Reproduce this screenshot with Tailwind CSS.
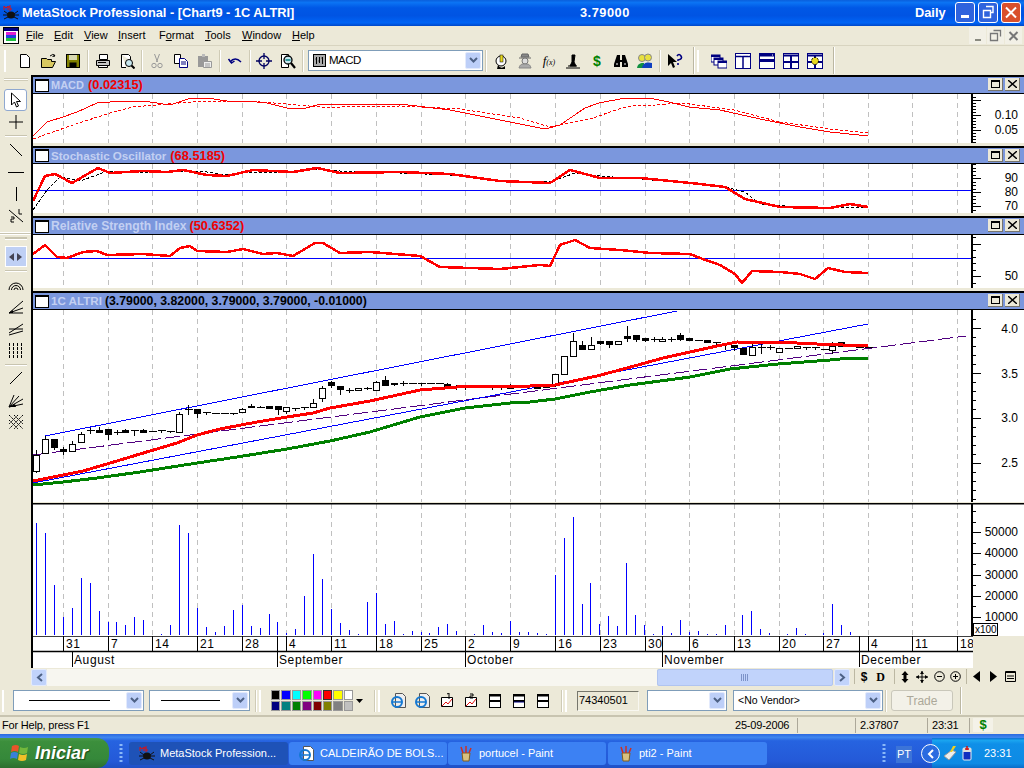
<!DOCTYPE html>
<html lang='en'>
<head>
	<meta charset='UTF-8'>
	<meta name='viewport' content='width=device-width, initial-scale=1.0'>
	<title>MetaStock Professional</title>
	<script src="https://cdn.jsdelivr.net/npm/@tailwindcss/browser@4"></script>
</head>
<body class="[font-family:'Liberation_Sans',Arial,sans-serif]">
<div class="w-[1024px] h-[768px] overflow-hidden flex flex-col bg-[#ece9d8] text-[11px] text-black">

	<!-- Title bar -->
	<div class="h-[26px] shrink-0 flex items-center relative text-white font-bold text-[12.8px] bg-[linear-gradient(180deg,#0a5fdc_0%,#0b74f4_10%,#0058e6_30%,#0054e3_60%,#0064f5_88%,#0047c8_100%)]">
		<svg class="ml-[3px] w-[16px] h-[16px]" viewBox="0 0 16 16"><ellipse cx="8" cy="10" rx="4" ry="3.5" fill="#111"/><path d="M1 6l4 3M0 10l4 0M1 14l4-2M15 6l-4 3M16 10l-4 0M15 14l-4-2" stroke="#111"/><path d="M1 5V1l2 2 2-2v4M8 1H6v2h2v2H6" stroke="#e01010" fill="none"/></svg>
		<span class="ml-[3px]">MetaStock Professional - [Chart9 - 1C ALTRI]</span>
		<span class="absolute left-[580px] tracking-[.5px]">3.79000</span>
		<span class="absolute left-[915px]">Daily</span>
		<div class="absolute left-[955px] top-[2px] w-[20px] h-[21px] rounded-[3px] border border-white bg-[#2f63dd] flex items-end"><div class="w-[8px] h-[3px] bg-white ml-[5px] mb-[4px]"></div></div>
		<div class="absolute left-[978px] top-[2px] w-[20px] h-[21px] rounded-[3px] border border-white bg-[#2f63dd]"><svg viewBox="0 0 18 19" class="w-[18px] h-[19px]"><path d="M7 3.5h7v6h-2M4.500 7.500h7v7h-7z" stroke="#fff" stroke-width="1.400" fill="none"/></svg></div>
		<div class="absolute left-[1001px] top-[2px] w-[20px] h-[21px] rounded-[3px] border border-white bg-[#d9502c]"><svg viewBox="0 0 18 19" class="w-[18px] h-[19px]"><path d="M4 4.500l10 10M14 4.500l-10 10" stroke="#fff" stroke-width="2"/></svg></div>
	</div>

	<!-- Menu bar -->
	<div class="h-[20px] shrink-0 flex items-center relative border-b border-[#d8d4c0]">
		<svg class="ml-[3px] w-[16px] h-[17px]" viewBox="0 0 16 17"><rect x=".5" y=".5" width="15" height="16" fill="#fff" stroke="#000"/><rect x="1" y="1" width="14" height="3" fill="#000080"/><rect x="3" y="5" width="10" height="3" fill="#e020d0"/><rect x="3" y="8" width="10" height="3" fill="#2040e0"/><rect x="3" y="11" width="10" height="3" fill="#20c040"/></svg>
		<div class="flex ml-[7px]">
			<span class="w-[28px]"><u>F</u>ile</span>
			<span class="w-[30px]"><u>E</u>dit</span>
			<span class="w-[34px]"><u>V</u>iew</span>
			<span class="w-[41px]"><u>I</u>nsert</span>
			<span class="w-[46px]">F<u>o</u>rmat</span>
			<span class="w-[37px]"><u>T</u>ools</span>
			<span class="w-[50px]"><u>W</u>indow</span>
			<span><u>H</u>elp</span>
		</div>
		<div class="absolute right-[2px] top-[1px] flex gap-[1px]">
			<div class="w-[17px] h-[17px] bg-[#f2f0e6] flex items-end justify-center"><div class="w-[6px] h-[2px] bg-[#8a8a80] mb-[3px]"></div></div>
			<div class="w-[17px] h-[17px] bg-[#f2f0e6]"><svg viewBox="0 0 17 17"><path d="M6.500 3.500h7v6M3.500 6.500h7v7h-7z" stroke="#777" fill="none" stroke-width="1.300"/></svg></div>
			<div class="w-[17px] h-[17px] bg-[#f2f0e6]"><svg viewBox="0 0 17 17"><path d="M4.500 5l8 8M12.500 5l-8 8" stroke="#777" stroke-width="2"/></svg></div>
		</div>
	</div>

	<!-- Main toolbar -->
	<div class="h-[29px] shrink-0 flex items-center pl-[4px]">
		<div class="w-[2px] h-[22px] border-x border-x-[#fff] bg-[#cfcbb6] mr-[7px]"></div>
		<div class="w-6 flex justify-center"><svg class="w-[16px] h-[16px]" viewBox="0 0 16 16"><path d="M3.500 1.500h6l3 3v10h-9z" fill="#fff" stroke="#000"/></svg></div>
		<div class="w-6 flex justify-center"><svg class="w-[16px] h-[16px]" viewBox="0 0 16 16"><path d="M.5 14.500v-9h5l1 1h4v2h4l-3 6z" fill="#d8c860" stroke="#000"/><path d="M9 3q3-3 5 0M14 3l-1.500-2M14 3l-2.500.5" stroke="#000" fill="none"/></svg></div>
		<div class="w-6 flex justify-center"><svg class="w-[16px] h-[16px]" viewBox="0 0 16 16"><rect x="1.500" y="1.500" width="13" height="13" fill="#808000" stroke="#000"/><rect x="4" y="2" width="8" height="5" fill="#d8d8b0"/><rect x="4.500" y="9.500" width="7" height="5" fill="#000"/></svg></div>
		<div class="w-[2px] h-[22px] mx-[2px] border-r border-white bg-[#cfcbb6]"></div>
		<div class="w-6 flex justify-center"><svg class="w-[16px] h-[16px]" viewBox="0 0 16 16"><path d="M4.500 1.500h8v5h-8z" fill="#fff" stroke="#000"/><path d="M1.500 7.500h13v5h-13z" fill="#c8c8c8" stroke="#000"/><path d="M3.500 12.500h9v2h-9z" fill="#fff" stroke="#000"/><path d="M3 9.500h8" stroke="#000"/></svg></div>
		<div class="w-6 flex justify-center"><svg class="w-[16px] h-[16px]" viewBox="0 0 16 16"><path d="M2.500 1.500h7l2 2v4M7 14.500H2.500v-13" fill="#fff" stroke="#000"/><circle cx="10" cy="10" r="3.500" fill="#c8e8f0" stroke="#000"/><path d="M12.500 12.500l3 3" stroke="#000" stroke-width="2"/></svg></div>
		<div class="w-[2px] h-[22px] mx-[2px] border-r border-white bg-[#cfcbb6]"></div>
		<div class="w-6 flex justify-center"><svg class="w-[16px] h-[16px]" viewBox="0 0 16 16"><path d="M5.500 1l3 8M10.500 1l-3 8" stroke="#999" fill="none"/><circle cx="5" cy="12.500" r="2.200" fill="none" stroke="#999"/><circle cx="11" cy="12.500" r="2.200" fill="none" stroke="#999"/></svg></div>
		<div class="w-6 flex justify-center"><svg class="w-[16px] h-[16px]" viewBox="0 0 16 16"><path d="M1.500 1.500h6v9h-6z" fill="#fff" stroke="#000"/><path d="M6.500 5.500h5l3 3v6h-8z" fill="#fff" stroke="#000080"/><path d="M8 9h5M8 11h5" stroke="#000080"/></svg></div>
		<div class="w-6 flex justify-center"><svg class="w-[16px] h-[16px]" viewBox="0 0 16 16"><path d="M1 3h10v11H1z" fill="#999"/><path d="M5 1h3v3H5z" fill="#bbb"/><path d="M6.500 8.500h8v6h-8z" fill="#eee" stroke="#999"/><path d="M8 11h5M8 13h5" stroke="#999"/></svg></div>
		<div class="w-[2px] h-[22px] mx-[2px] border-r border-white bg-[#cfcbb6]"></div>
		<div class="w-6 flex justify-center"><svg class="w-[16px] h-[16px]" viewBox="0 0 16 16"><path d="M1.500 6l3 4 3-2" stroke="#000080" fill="none" stroke-width="1.500"/><path d="M3 9q5-6 11 0" stroke="#000080" fill="none" stroke-width="1.500"/></svg></div>
		<div class="w-[2px] h-[22px] mx-[1.500px] border-r border-white bg-[#cfcbb6]"></div>
		<div class="w-6 flex justify-center"><svg class="w-[16px] h-[16px]" viewBox="0 0 16 16"><circle cx="8" cy="8" r="5" fill="none" stroke="#000060" stroke-width="1.300"/><path d="M8 0v6M8 10v6M0 8h6M10 8h6" stroke="#000060" stroke-width="1.300"/></svg></div>
		<div class="w-6 flex justify-center"><svg class="w-[16px] h-[16px]" viewBox="0 0 16 16"><path d="M1.500 1.500h7v13h-7z" fill="#fff" stroke="#000"/><circle cx="8" cy="7" r="4" fill="#c8e8f0" stroke="#000" stroke-width="1.300"/><path d="M5.500 7h5" stroke="#008080" stroke-width="1.500"/><path d="M11 10l4 5" stroke="#000" stroke-width="2.200"/></svg></div>
		<div class="w-[2px] h-[22px] mx-[2px] border-r border-white bg-[#cfcbb6]"></div>
		<!-- Indicator combo -->
		<div class="ml-[2px] w-[175px] h-[21px] border border-[#7f9db9] bg-white flex items-center justify-between pl-[4px] pr-[1px] text-[11.500px]">
			<div class="flex items-center gap-[3px]"><svg class="w-[13px] h-[13px]" viewBox="0 0 13 13"><rect x=".5" y=".5" width="12" height="12" fill="#aaa" stroke="#000"/><path d="M3.500 3v7M6.500 3v6M9.500 3v7M2.500 5h1M5.500 7h1M8.500 4h1" stroke="#000"/></svg><span class="tracking-[-.5px]">MACD</span></div>
			<div class="w-[16px] h-[17px] rounded-[2px] bg-[#bdcff8] border border-[#e3eafc] flex items-center justify-center"><svg class="w-[9px] h-[7px]" viewBox="0 0 9 7"><path d="M1 1l3.500 3.500L8 1" stroke="#4d6185" stroke-width="2" fill="none"/></svg></div>
		</div>
		<div class="w-[2px] h-[22px] mx-[2px] border-r border-white bg-[#cfcbb6]"></div>
		<div class="w-6 flex justify-center"><svg class="w-[16px] h-[18px]" viewBox="0 0 16 18"><circle cx="8" cy="9" r="5" fill="#fff" stroke="#000"/><path d="M5 13q3 5 7 1v3H4z" fill="#000"/><rect x="7" y="3" width="3" height="7" fill="#e8d820" stroke="#000" stroke-width=".5"/></svg></div>
		<div class="w-6 flex justify-center"><svg class="w-[16px] h-[16px]" viewBox="0 0 16 16"><path d="M4 4h8l-1-3H5zM2 5h12" stroke="#666" fill="#888"/><circle cx="8" cy="8" r="3" fill="#ddd" stroke="#777"/><path d="M2 15c1-4 3-4 6-4s5 0 6 4z" fill="#aaa" stroke="#888"/></svg></div>
		<div class="w-6 flex justify-center"><span class="[font-family:'Liberation_Serif',serif] italic text-[13px] leading-none">f<span class="text-[8px]">(x)</span></span></div>
		<div class="w-6 flex justify-center"><svg class="w-[16px] h-[16px]" viewBox="0 0 16 16"><path d="M1 15h14M3 13h9M7 2l3 0-1 7 2 4H5l2-4z" stroke="#000" fill="#000"/></svg></div>
		<div class="w-6 flex justify-center text-[#008000] font-bold text-[14px] leading-none">$</div>
		<div class="w-6 flex justify-center"><svg class="w-[16px] h-[16px]" viewBox="0 0 16 16"><path d="M4 2h3v5h2V2h3l3 9v3H9V9H7v5H1v-3z" fill="#000"/><path d="M3 11h2M11 11h2" stroke="#fff"/></svg></div>
		<div class="w-6 flex justify-center"><svg class="w-[16px] h-[16px]" viewBox="0 0 16 16"><circle cx="5" cy="5" r="3.500" fill="#e8e040" stroke="#888"/><circle cx="11" cy="4.500" r="3.500" fill="#e8e040" stroke="#888"/><path d="M0 15c1-5 4-5 7-5v5z" fill="#109040"/><path d="M5 15c1-6 6-6 10-5v5z" fill="#1040c0"/></svg></div>
		<div class="w-[2px] h-[22px] mx-[2px] border-r border-white bg-[#cfcbb6]"></div>
		<div class="w-6 flex justify-center"><svg class="w-[16px] h-[16px]" viewBox="0 0 16 16"><path d="M1 1v12l3-3 2 5 2-1-2-5h4z" fill="#000"/><path d="M10 3q2-3 4 0t-3 4v1" stroke="#000080" stroke-width="1.600" fill="none"/><path d="M11 10v2" stroke="#000080" stroke-width="1.600"/></svg></div>
		<div class="w-[2px] h-[27px] ml-[6px] mr-[2px] border-r border-white bg-[#bbb7a2]"></div>
		<div class="w-[2px] h-[22px] border-x border-x-[#fff] bg-[#cfcbb6] mr-[8px]"></div>
		<div class="w-6 flex justify-center"><svg class="w-[16px] h-[16px]" viewBox="0 0 16 16"><rect x="0" y="2" width="9" height="7" fill="#fff" stroke="#000080"/><rect x="0" y="2" width="9" height="2" fill="#000080"/><rect x="3" y="5" width="9" height="7" fill="#fff" stroke="#000080"/><rect x="3" y="5" width="9" height="2" fill="#000080"/><rect x="7" y="8" width="9" height="7" fill="#fff" stroke="#000080"/><rect x="7" y="8" width="9" height="2" fill="#000080"/></svg></div>
		<div class="w-6 flex justify-center"><svg class="w-[16px] h-[16px]" viewBox="0 0 16 16"><rect x=".5" y=".5" width="15" height="15" fill="#fff" stroke="#000080"/><path d="M0 3.500h16M8 3v13" stroke="#000080" stroke-width="1.500"/><path d="M6.500 2h1M13 2h1" stroke="#fff"/></svg></div>
		<div class="w-6 flex justify-center"><svg class="w-[16px] h-[16px]" viewBox="0 0 16 16"><rect x=".5" y=".5" width="15" height="15" fill="#fff" stroke="#000080"/><path d="M0 2h16M0 7.500h16" stroke="#000080" stroke-width="3"/><path d="M13 2h1" stroke="#fff"/></svg></div>
		<div class="w-6 flex justify-center"><svg class="w-[16px] h-[16px]" viewBox="0 0 16 16"><rect x=".5" y=".5" width="15" height="15" fill="#fff" stroke="#000080"/><path d="M0 2.500h16M0 9h16M8 2v14" stroke="#000080" stroke-width="2"/></svg></div>
		<div class="w-6 flex justify-center"><svg class="w-[16px] h-[16px]" viewBox="0 0 16 16"><rect x=".5" y=".5" width="15" height="15" fill="#fff" stroke="#000080"/><path d="M0 2.500h16M0 9h16M8 2v14" stroke="#000080" stroke-width="2"/><circle cx="8" cy="8" r="3.500" fill="#e8d820" stroke="#000" stroke-dasharray="2 1"/></svg></div>
		<div class="w-[2px] h-[27px] ml-[6px] border-r border-white bg-[#bbb7a2]"></div>
	</div>

	<!-- Left tools and chart -->
	<div class="h-[593px] shrink-0 flex">
		<div class="w-[31px] shrink-0 flex flex-col items-center pt-[3px]">
			<div class="w-[24px] h-[3px] border-y border-y-[#d0ccb8] bg-white"></div>
			<div class="mt-[8px] w-[23px] h-[22px] rounded-[3px] bg-white border border-[#8fa8d0] flex items-center justify-center"><svg class="w-[12px] h-[16px]" viewBox="0 0 12 16"><path d="M1.500 1v12l3-3 2 5 2-1-2-4.500h4z" fill="#fff" stroke="#000"/></svg></div>
			<div class="h-[22px] flex items-center"><svg class="w-[14px] h-[14px]" viewBox="0 0 14 14"><path d="M7 0v14M0 7h14" stroke="#000"/></svg></div>
			<div class="w-[22px] h-[2px] my-[2px] bg-[#c8c4b0] border-b border-white"></div>
			<div class="h-[22px] flex items-center"><svg class="w-[14px] h-[14px]" viewBox="0 0 14 14"><path d="M1 1l12 12" stroke="#000"/></svg></div>
			<div class="h-[22px] flex items-center"><svg class="w-[16px] h-[14px]" viewBox="0 0 16 14"><path d="M0 7.500h16" stroke="#000"/></svg></div>
			<div class="h-[22px] flex items-center"><svg class="w-[14px] h-[14px]" viewBox="0 0 14 14"><path d="M7.500 0v14" stroke="#000"/></svg></div>
			<div class="h-[22px] flex items-center"><svg class="w-[16px] h-[16px]" viewBox="0 0 16 16"><path d="M1 2l14 12" stroke="#000"/><path d="M11 1v5h3M3 9h3v2H3v3h3" stroke="#000" fill="none"/></svg></div>
			<div class="w-[31px] h-[3px] mt-[5px] bg-[#c8c4b0] border-y border-y-white"></div>
			<div class="w-[22px] h-[3px] mt-[2px] bg-[#c8c4b0] border-b border-white"></div>
			<div class="mt-[6px] w-[22px] h-[21px] bg-[#bfd0f5] border border-white flex items-center justify-center gap-[3px]"><svg class="w-[5px] h-[8px]" viewBox="0 0 5 8"><path d="M5 0v8L0 4z" fill="#445"/></svg><svg class="w-[5px] h-[8px]" viewBox="0 0 5 8"><path d="M0 0v8l5-4z" fill="#445"/></svg></div>
			<div class="w-[22px] h-[2px] mt-[3px] mb-[2px] bg-[#c8c4b0] border-b border-white"></div>
			<div class="h-[22px] flex items-center"><svg class="w-[16px] h-[14px]" viewBox="0 0 16 14"><path d="M1 12a7 7 0 0 1 14 0M3.500 12a4.500 4.500 0 0 1 9 0M6 12a2 2 0 0 1 4 0" stroke="#000" fill="none"/></svg></div>
			<div class="h-[22px] flex items-center"><svg class="w-[16px] h-[14px]" viewBox="0 0 16 14"><path d="M1 13L15 1M1 13l14-5M1 13h14" stroke="#000" fill="none"/><path d="M1 13l4-3v3z" fill="#000"/></svg></div>
			<div class="h-[22px] flex items-center"><svg class="w-[16px] h-[14px]" viewBox="0 0 16 14"><path d="M1 11L15 2M1 7L15 7M1 13l14-4" stroke="#000" fill="none"/></svg></div>
			<div class="h-[22px] flex items-center"><svg class="w-[16px] h-[16px]" viewBox="0 0 16 16"><path d="M1.500 0v16M5.500 0v16M9.500 0v16M13.500 0v16" stroke="#000" stroke-dasharray="3 1"/></svg></div>
			<div class="w-[22px] h-[2px] my-[1.500px] bg-[#c8c4b0] border-b border-white"></div>
			<div class="h-[22px] flex items-center"><svg class="w-[14px] h-[14px]" viewBox="0 0 14 14"><path d="M1 13L13 1" stroke="#000"/></svg></div>
			<div class="h-[22px] flex items-center"><svg class="w-[16px] h-[16px]" viewBox="0 0 16 16"><path d="M1 15L6 3M1 15L11 4M1 15l14-8M1 15l14-3" stroke="#000"/><path d="M1 15l6-3 1 3z" fill="#000"/></svg></div>
			<div class="h-[22px] flex items-center"><svg class="w-[16px] h-[16px]" viewBox="0 0 16 16"><path d="M1 1l14 14M15 1L1 15M1 6l9 9M6 1l9 9M10 1L1 10M15 6l-9 9" stroke="#000" stroke-dasharray="1.500 .7"/></svg></div>
		</div>

		<div class="w-[993px] shrink-0 border-l-2 border-black flex flex-col">
			<!-- MACD pane -->
			<div class="h-[19px] shrink-0 border-t-2 border-b border-black bg-[#7b97dd] flex items-center pl-[2px] relative">
				<div class="w-[14px] h-[13px] bg-white border border-black border-t-2"></div>
				<span class="ml-[2px] font-bold text-[11px] text-[#c3d0f2]">MACD</span>
				<span class="ml-[4px] font-bold text-[12.800px] text-[#f00000]">(0.02315)</span>
				<div class="absolute right-[4px] top-[1px] flex gap-[2px]">
					<div class="w-[15px] h-[13px] bg-[#ece9d8] border-r border-b border-black/50 flex items-center justify-center"><div class="w-[9px] h-[8px] border border-black border-t-2"></div></div>
					<div class="w-[15px] h-[13px] bg-[#ece9d8] border-r border-b border-black/50 flex items-center justify-center"><svg class="w-[9px] h-[8px]" viewBox="0 0 9 8"><path d="M0 0l9 8M9 0L0 8" stroke="#000" stroke-width="1.400"/></svg></div>
				</div>
			</div>
			<svg id="macd" viewBox="33 94 991 49" class="block w-[991px] h-[49px] shrink-0 bg-white"></svg>

			<!-- Stochastic pane -->
			<div class="h-[18px] mt-[3px] shrink-0 border-t-2 border-b border-black bg-[#7b97dd] flex items-center pl-[2px] relative">
				<div class="w-[14px] h-[13px] bg-white border border-black border-t-2"></div>
				<span class="ml-[2px] font-bold text-[11.600px] text-[#c3d0f2]">Stochastic Oscillator</span>
				<span class="ml-[4px] font-bold text-[12.800px] text-[#f00000]">(68.5185)</span>
				<div class="absolute right-[4px] top-[1px] flex gap-[2px]">
					<div class="w-[15px] h-[13px] bg-[#ece9d8] border-r border-b border-black/50 flex items-center justify-center"><div class="w-[9px] h-[8px] border border-black border-t-2"></div></div>
					<div class="w-[15px] h-[13px] bg-[#ece9d8] border-r border-b border-black/50 flex items-center justify-center"><svg class="w-[9px] h-[8px]" viewBox="0 0 9 8"><path d="M0 0l9 8M9 0L0 8" stroke="#000" stroke-width="1.400"/></svg></div>
				</div>
			</div>
			<svg id="stoch" viewBox="33 164 991 49" class="block w-[991px] h-[49px] shrink-0 bg-white"></svg>

			<!-- RSI pane -->
			<div class="h-[19px] mt-[3px] shrink-0 border-t-2 border-b border-black bg-[#7b97dd] flex items-center pl-[2px] relative">
				<div class="w-[14px] h-[13px] bg-white border border-black border-t-2"></div>
				<span class="ml-[2px] font-bold text-[12.200px] text-[#c3d0f2]">Relative Strength Index</span>
				<span class="ml-[3px] font-bold text-[12.800px] text-[#f00000]">(50.6352)</span>
				<div class="absolute right-[4px] top-[1px] flex gap-[2px]">
					<div class="w-[15px] h-[13px] bg-[#ece9d8] border-r border-b border-black/50 flex items-center justify-center"><div class="w-[9px] h-[8px] border border-black border-t-2"></div></div>
					<div class="w-[15px] h-[13px] bg-[#ece9d8] border-r border-b border-black/50 flex items-center justify-center"><svg class="w-[9px] h-[8px]" viewBox="0 0 9 8"><path d="M0 0l9 8M9 0L0 8" stroke="#000" stroke-width="1.400"/></svg></div>
				</div>
			</div>
			<svg id="rsi" viewBox="33 235 991 53" class="block w-[991px] h-[53px] shrink-0 bg-white"></svg>

			<!-- Price pane -->
			<div class="h-[19px] mt-[3px] shrink-0 border-t-2 border-b border-black bg-[#7b97dd] flex items-center pl-[2px] relative">
				<div class="w-[14px] h-[13px] bg-white border border-black border-t-2"></div>
				<span class="ml-[2px] font-bold text-[11.600px] text-[#c3d0f2]">1C ALTRI</span>
				<span class="ml-[3px] font-bold text-[12.300px]">(3.79000, 3.82000, 3.79000, 3.79000, -0.01000)</span>
				<div class="absolute right-[4px] top-[1px] flex gap-[2px]">
					<div class="w-[15px] h-[13px] bg-[#ece9d8] border-r border-b border-black/50 flex items-center justify-center"><div class="w-[9px] h-[8px] border border-black border-t-2"></div></div>
					<div class="w-[15px] h-[13px] bg-[#ece9d8] border-r border-b border-black/50 flex items-center justify-center"><svg class="w-[9px] h-[8px]" viewBox="0 0 9 8"><path d="M0 0l9 8M9 0L0 8" stroke="#000" stroke-width="1.400"/></svg></div>
				</div>
			</div>
			<svg id="price" viewBox="33 310 991 192" class="block w-[991px] h-[192px] shrink-0 bg-white"></svg>
			<div class="h-[1px] shrink-0 bg-[#ece9d8]"></div>
			<!-- Volume pane -->
			<svg id="volume" viewBox="33 503 991 133" class="block w-[991px] h-[133px] shrink-0 bg-white"></svg>
			<svg id="dates" viewBox="33 636 940 32" class="block w-[940px] h-[32px] shrink-0 bg-white"></svg>
		</div>
	</div>

	<!-- Scroll row -->
	<div class="h-[18px] shrink-0 flex items-start pl-[31px] pt-[1px]">
		<div class="w-[16px] h-[17px] rounded-[2px] bg-[#c1d3fb] border border-[#e3eafc] flex items-center justify-center"><svg class="w-[7px] h-[9px]" viewBox="0 0 7 9"><path d="M6 1L2 4.500 6 8" stroke="#4d6185" stroke-width="2" fill="none"/></svg></div>
		<div class="w-[610px] h-[17px] bg-[#f7f6f0]"></div>
		<div class="w-[176px] h-[17px] rounded-[2px] bg-[#c1d3fb] border border-[#b0c4f0] flex items-center justify-center"><svg class="w-[8px] h-[7px]" viewBox="0 0 8 7"><path d="M.5 0v7M2.500 0v7M4.500 0v7M6.500 0v7" stroke="#7d93c8"/></svg></div>
		<div class="w-[16px] h-[17px] ml-[1px] rounded-[2px] bg-[#c1d3fb] border border-[#e3eafc] flex items-center justify-center"><svg class="w-[7px] h-[9px]" viewBox="0 0 7 9"><path d="M1 1l4 3.500L1 8" stroke="#4d6185" stroke-width="2" fill="none"/></svg></div>
		<div class="w-[1px] h-[15px] ml-[4px] bg-[#bbb7a2]"></div>
		<div class="h-[15px] flex items-center">
			<div class="w-[16px] ml-[1px] text-center font-bold text-[12px]">$</div>
			<div class="w-[17px] text-center font-bold text-[12px] [font-family:'Liberation_Serif',serif]">D</div>
			<div class="w-[1px] h-[15px] mx-[5px] bg-[#bbb7a2]"></div>
			<svg class="w-[10px] h-[12px]" viewBox="0 0 10 12"><path d="M5 0l3.500 4h-7zM5 12l3.500-4h-7zM3.500 4h3v4h-3z" fill="#000"/></svg>
			<svg class="w-[12px] h-[12px] ml-[6px]" viewBox="0 0 12 12"><path d="M6 0v12M0 6h12" stroke="#000"/><path d="M6 0l2 3H4zM6 12l2-3H4zM0 6l3-2v4zM12 6l-3-2v4z" fill="#000"/></svg>
			<svg class="w-[11px] h-[11px] ml-[6px]" viewBox="0 0 11 11"><circle cx="5.500" cy="5.500" r="4.800" stroke="#000" fill="none"/><path d="M3 5.500h5" stroke="#000"/></svg>
			<svg class="w-[11px] h-[11px] ml-[5px]" viewBox="0 0 11 11"><circle cx="5.500" cy="5.500" r="4.800" stroke="#000" fill="none"/><path d="M3 5.500h5M5.500 3v5" stroke="#000"/></svg>
			<div class="w-[1px] h-[15px] mx-[5px] bg-[#bbb7a2]"></div>
			<svg class="w-[7px] h-[11px] ml-[1px]" viewBox="0 0 7 11"><path d="M7 0v11L0 5.500z" fill="#000"/></svg>
			<svg class="w-[7px] h-[11px] ml-[10px]" viewBox="0 0 7 11"><path d="M0 0v11l7-5.500z" fill="#000"/></svg>
			<svg class="w-[11px] h-[11px] ml-[8px]" viewBox="0 0 11 11"><path d="M.5.500h10v10H.5z" fill="none" stroke="#000"/><path d="M0 1.500h11M2 5h7M2 7.500h7" stroke="#000"/></svg>
		</div>
	</div>

	<!-- Bottom toolbar -->
	<div class="h-[31px] shrink-0 flex items-center pl-[2px] border-b-2 border-[#c8c4b0]">
		<div class="w-[2px] h-[22px] border-x border-x-[#fff] bg-[#cfcbb6] mr-[9px]"></div>
		<div class="w-[131px] h-[21px] border border-[#7f9db9] bg-white flex items-center justify-between pl-[15px] pr-[1px]">
			<div class="w-[81px] h-[1px] bg-black"></div>
			<div class="w-[16px] h-[17px] rounded-[2px] bg-[#bdcff8] border border-[#e3eafc] flex items-center justify-center"><svg class="w-[9px] h-[7px]" viewBox="0 0 9 7"><path d="M1 1l3.500 3.500L8 1" stroke="#4d6185" stroke-width="2" fill="none"/></svg></div>
		</div>
		<div class="ml-[5px] w-[101px] h-[21px] border border-[#7f9db9] bg-white flex items-center justify-between pl-[11px] pr-[1px]">
			<div class="w-[59px] h-[1px] bg-black"></div>
			<div class="w-[16px] h-[17px] rounded-[2px] bg-[#bdcff8] border border-[#e3eafc] flex items-center justify-center"><svg class="w-[9px] h-[7px]" viewBox="0 0 9 7"><path d="M1 1l3.500 3.500L8 1" stroke="#4d6185" stroke-width="2" fill="none"/></svg></div>
		</div>
		<div class="w-[2px] h-[22px] ml-[5px] border-r border-white bg-[#cfcbb6]"></div>
		<div class="w-[2px] h-[22px] ml-[2px] border-x border-x-[#fff] bg-[#cfcbb6]"></div>
		<div class="ml-[10px] w-[82px] grid grid-cols-8 gap-[1px]">
			<div class="h-[10px] bg-black border border-[#999]"></div>
			<div class="h-[10px] bg-[#0000ff] border border-[#999]"></div>
			<div class="h-[10px] bg-[#00ffff] border border-[#999]"></div>
			<div class="h-[10px] bg-[#00ff00] border border-[#999]"></div>
			<div class="h-[10px] bg-[#ff00ff] border border-[#999]"></div>
			<div class="h-[10px] bg-[#ff0000] border border-[#333]"></div>
			<div class="h-[10px] bg-[#ffff00] border border-[#999]"></div>
			<div class="h-[10px] bg-white border border-[#999]"></div>
			<div class="h-[10px] bg-[#000080] border border-[#999]"></div>
			<div class="h-[10px] bg-[#008080] border border-[#999]"></div>
			<div class="h-[10px] bg-[#008000] border border-[#999]"></div>
			<div class="h-[10px] bg-[#800080] border border-[#999]"></div>
			<div class="h-[10px] bg-[#800000] border border-[#999]"></div>
			<div class="h-[10px] bg-[#808000] border border-[#999]"></div>
			<div class="h-[10px] bg-[#808080] border border-[#999]"></div>
			<div class="h-[10px] bg-[#c0c0c0] border border-[#999]"></div>
		</div>
		<svg class="ml-[3px] w-[7px] h-[4px]" viewBox="0 0 7 4"><path d="M0 0h7L3.500 4z" fill="#000"/></svg>
		<div class="w-[2px] h-[22px] ml-[11px] border-r border-white bg-[#cfcbb6]"></div>
		<div class="w-[2px] h-[22px] ml-[2px] border-x border-x-[#fff] bg-[#cfcbb6]"></div>
		<div class="flex ml-[7px]">
			<div class="w-6 flex justify-center"><svg class="w-[16px] h-[16px]" viewBox="0 0 16 16"><path d="M4.500.5h7l3 3v11h-10z" fill="#eee" stroke="#555"/><circle cx="6" cy="9" r="5" fill="none" stroke="#1478d2" stroke-width="2"/><path d="M2 9h8" stroke="#1478d2" stroke-width="1.500"/></svg></div>
			<div class="w-6 flex justify-center"><svg class="w-[16px] h-[16px]" viewBox="0 0 16 16"><path d="M4.500.5h7l3 3v11h-10z" fill="#eee" stroke="#555"/><circle cx="6" cy="9" r="5" fill="none" stroke="#1478d2" stroke-width="2"/><path d="M2 9h8" stroke="#1478d2" stroke-width="1.500"/></svg></div>
			<div class="w-6 flex justify-center"><svg class="w-[16px] h-[16px]" viewBox="0 0 16 16"><path d="M2.500 4.500h11v9h-11z" fill="#fff" stroke="#000"/><path d="M3 13l4-4 2 2 4-5" stroke="#e01010" fill="none"/><path d="M8 1l2-1v6" stroke="#000" fill="none"/></svg></div>
			<div class="w-6 flex justify-center"><svg class="w-[16px] h-[16px]" viewBox="0 0 16 16"><path d="M2.500 4.500h11v9h-11z" fill="#fff" stroke="#000"/><path d="M3 13l4-4 2 2 4-5" stroke="#e01010" fill="none"/><path d="M7 1h3v2H7v2h3" stroke="#000" fill="none"/></svg></div>
			<div class="w-6 flex justify-center"><svg class="w-[16px] h-[16px]" viewBox="0 0 16 16"><rect x="2.500" y="1.500" width="11" height="13" fill="#fff" stroke="#000"/><path d="M2 2.500h12M2 8h12" stroke="#000" stroke-width="2"/></svg></div>
			<div class="w-6 flex justify-center"><svg class="w-[16px] h-[16px]" viewBox="0 0 16 16"><rect x="2.500" y="1.500" width="11" height="13" fill="#fff" stroke="#000"/><path d="M2 2.500h12M2 8h12" stroke="#000" stroke-width="2"/><path d="M3 9h10" stroke="#000080"/></svg></div>
			<div class="w-6 flex justify-center"><svg class="w-[16px] h-[16px]" viewBox="0 0 16 16"><rect x="2.500" y="1.500" width="11" height="13" fill="#fff" stroke="#000"/><path d="M2 2.500h12M2 8h12" stroke="#000" stroke-width="2"/></svg></div>
		</div>
		<div class="w-[2px] h-[22px] ml-[6px] border-r border-white bg-[#cfcbb6]"></div>
		<div class="w-[2px] h-[22px] ml-[2px] border-x border-x-[#fff] bg-[#cfcbb6]"></div>
		<div class="ml-[10px] w-[62px] h-[20px] bg-[#ece9d8] border border-[#f8f7f0] border-t-[#77776c] border-l-[#77776c] pl-[1px] text-[11px] flex items-center">74340501</div>
		<div class="ml-[8px] w-[80px] h-[21px] border border-[#7f9db9] bg-white flex items-center justify-end pr-[1px]">
			<div class="w-[16px] h-[17px] rounded-[2px] bg-[#bdcff8] border border-[#e3eafc] flex items-center justify-center"><svg class="w-[9px] h-[7px]" viewBox="0 0 9 7"><path d="M1 1l3.500 3.500L8 1" stroke="#4d6185" stroke-width="2" fill="none"/></svg></div>
		</div>
		<div class="ml-[6px] w-[150px] h-[21px] border border-[#7f9db9] bg-white flex items-center justify-between pl-[4px] pr-[1px] text-[10.500px]">
			<span>&lt;No Vendor&gt;</span>
			<div class="w-[16px] h-[17px] rounded-[2px] bg-[#bdcff8] border border-[#e3eafc] flex items-center justify-center"><svg class="w-[9px] h-[7px]" viewBox="0 0 9 7"><path d="M1 1l3.500 3.500L8 1" stroke="#4d6185" stroke-width="2" fill="none"/></svg></div>
		</div>
		<div class="w-[2px] h-[22px] ml-[2px] border-r border-white bg-[#cfcbb6]"></div>
		<div class="ml-[4px] w-[62px] h-[21px] rounded-[3px] border border-[#c9c7ba] bg-[#f3f1e8] text-[#aca899] text-[12px] flex items-center justify-center">Trade</div>
		<div class="w-[2px] h-[27px] ml-[7px] border-r border-white bg-[#bbb7a2]"></div>
	</div>

	<!-- Status bar -->
	<div class="h-[17px] shrink-0 flex items-center relative text-[11px] tracking-[-.2px]">
		<span class="ml-[2px]">For Help, press F1</span>
		<span class="absolute left-[735px]">25-09-2006</span>
		<div class="absolute left-[797px] top-[1px] h-[15px] w-[1px] bg-[#aca899]"></div>
		<div class="absolute left-[855px] top-[1px] h-[15px] w-[1px] bg-[#aca899]"></div>
		<span class="absolute left-[860px]">2.37807</span>
		<div class="absolute left-[927px] top-[1px] h-[15px] w-[1px] bg-[#aca899]"></div>
		<span class="absolute left-[932px]">23:31</span>
		<div class="absolute left-[969px] top-[1px] h-[15px] w-[1px] bg-[#aca899]"></div>
		<div class="absolute left-[973px] top-[1px] w-[20px] h-[14px] bg-[#f4f2e8] text-[#008000] font-bold text-[13px] leading-[14px] text-center">$</div>
	</div>

	<!-- Taskbar -->
	<div class="h-[34px] shrink-0 flex items-stretch relative text-white text-[11px] bg-[linear-gradient(180deg,#2a68e0_0%,#3f86ee_10%,#2663e0_20%,#2459d8_80%,#1f50c4_100%)]">
		<div class="w-[109px] mt-[4px] rounded-r-[12px] bg-[linear-gradient(180deg,#4a9a4a_0%,#3c8f3c_12%,#35883a_70%,#2c6e2e_100%)] flex items-center pl-[10px] gap-[5px]">
			<svg class="w-[20px] h-[20px]" viewBox="0 0 20 20"><path d="M2 3q4-2 7 0l-1 6q-3-2-7 0z" fill="#e8542a"/><path d="M10 4q4 2 8 0l-1 6q-4 2-8 0z" fill="#72b83c"/><path d="M1 10q3-2 7 0l-1 6q-4-2-7 0z" fill="#3a80d8"/><path d="M9 11q4 2 8 0l-1 6q-4 2-8 0z" fill="#f0c028"/></svg>
			<span class="italic font-bold text-[18px] [text-shadow:1px_1px_1px_#1a4a1a]">Iniciar</span>
		</div>
		<svg class="ml-[10px] w-[4px] h-[34px]" viewBox="0 0 4 34"><path d="M2 10v20" stroke="#8ab8f8" stroke-width="3" stroke-dasharray="2 2"/></svg>
		<div class="ml-[6px] w-[159px] mt-[8px] mb-[3px] rounded-[3px] bg-[#1e52b7] flex items-center pl-[10px] gap-[5px]">
			<svg class="w-[16px] h-[16px] shrink-0" viewBox="0 0 16 16"><ellipse cx="8" cy="10" rx="4" ry="3.500" fill="#111"/><path d="M1 6l4 3M0 10l4 0M1 14l4-2M15 6l-4 3M16 10l-4 0M15 14l-4-2" stroke="#111"/><path d="M1 5V1l2 2 2-2v4M8 1H6v2h2v2H6" stroke="#e01010" fill="none"/></svg>
			<span class="whitespace-nowrap">MetaStock Profession...</span>
		</div>
		<div class="ml-[1px] w-[158px] mt-[8px] mb-[3px] rounded-[3px] bg-[#3c81f3] flex items-center pl-[10px] gap-[5px]">
			<svg class="w-[16px] h-[16px] shrink-0" viewBox="0 0 16 16"><path d="M4.500.5h7l3 3v11h-10z" fill="#fff" stroke="#555"/><circle cx="6" cy="9" r="5" fill="none" stroke="#1478d2" stroke-width="2"/><path d="M2 9h8" stroke="#1478d2" stroke-width="1.500"/></svg>
			<span class="whitespace-nowrap">CALDEIRÃO DE BOLS...</span>
		</div>
		<div class="ml-[1px] w-[158px] mt-[8px] mb-[3px] rounded-[3px] bg-[#3c81f3] flex items-center pl-[10px] gap-[5px]">
			<svg class="w-[16px] h-[16px] shrink-0" viewBox="0 0 16 16"><path d="M4 7h8l-1 8H5z" fill="#d8c080" stroke="#806020"/><path d="M5 7L3 1M8 7V0M11 7l2-5" stroke="#d03020" stroke-width="1.500"/></svg>
			<span class="whitespace-nowrap">portucel - Paint</span>
		</div>
		<div class="ml-[2px] w-[159px] mt-[8px] mb-[3px] rounded-[3px] bg-[#3c81f3] flex items-center pl-[10px] gap-[5px]">
			<svg class="w-[16px] h-[16px] shrink-0" viewBox="0 0 16 16"><path d="M4 7h8l-1 8H5z" fill="#d8c080" stroke="#806020"/><path d="M5 7L3 1M8 7V0M11 7l2-5" stroke="#d03020" stroke-width="1.500"/></svg>
			<span class="whitespace-nowrap">pti2 - Paint</span>
		</div>
		<svg class="absolute left-[882px] top-0 w-[4px] h-[34px]" viewBox="0 0 4 34"><path d="M2 10v20" stroke="#8ab8f8" stroke-width="3" stroke-dasharray="2 2"/></svg>
		<div class="absolute left-[896px] top-[12px] w-[16px] h-[17px] bg-[#3c74d8] text-center leading-[17px]">PT</div>
		<div class="absolute left-[932px] top-[4px] bottom-0 right-0 flex items-center bg-[linear-gradient(180deg,#0c6fd0_0%,#1aa4ef_8%,#0f8fe8_20%,#0d8ae4_85%,#0a6cc8_100%)]">
			<div class="absolute left-[-11px] top-[6px] w-[19px] h-[19px] rounded-full bg-[#2a6be0] border border-white flex items-center justify-center"><svg class="w-[8px] h-[10px]" viewBox="0 0 8 10"><path d="M6 1L2 5l4 4" stroke="#fff" stroke-width="2" fill="none"/></svg></div>
			<svg class="ml-[11px] w-[16px] h-[16px]" viewBox="0 0 16 16"><path d="M1 11l8-6 4 2-7 8z" fill="#eee" stroke="#999"/><path d="M7 7l3-6h3L9 7z" fill="#f0d020"/></svg>
			<svg class="ml-[2px] w-[12px] h-[16px]" viewBox="0 0 12 16"><rect x="2" y="3" width="8" height="12" rx="1" fill="#1030c0" stroke="#eee"/><rect x="2" y="3" width="8" height="4" fill="#ddd"/><path d="M6 1v4M4 4h4" stroke="#d01010" stroke-width="1.500"/></svg>
			<span class="ml-[11px]">23:31</span>
		</div>
	</div>
</div>

<script>
	// Chart data is in screen coordinates of the picture
	const gridX = [63,108,152,197,242,286,331,376,421,465,510,555,600,645,689,734,779,823,868,912,957];
	const AXIS = 971;

	const grid = (y1, y2) => gridX.map(x =>
		`<path d="M${x+.5} ${y1}V${y2}" stroke="#c0c0c0" stroke-dasharray="5 4"/>`).join('');
	const line = (pts, color, width, dash) =>
		`<polyline points="${pts.join(' ')}" fill="none" stroke="${color}" stroke-width="${width}" shape-rendering="crispEdges"${dash ? ` stroke-dasharray="${dash}"` : ''}/>`;
	const hline = (y, color) => `<path d="M33 ${y+.5}H${AXIS}" stroke="${color}"/>`;
	const label = (txt, y) =>
		`<text x="1018" y="${y+4}" text-anchor="end" font-size="12" font-family="Liberation Sans">${txt}</text>`;

	// Axis line with minor ticks every step and long ticks at the labels
	const axis = (y1, y2, start, step, majors) => {
		let out = `<path d="M${AXIS+1} ${y1}V${y2}" stroke="#000" stroke-width="2"/>`;
		for (let y = start; y < y2; y += step) {
			const long = majors.some(m => Math.abs(m - y) < step / 2);
			out += `<path d="M${AXIS} ${Math.round(y)+.5}h${long ? 10 : 5}" stroke="#000"/>`;
		}
		return out;
	};

	// MACD
	document.getElementById('macd').innerHTML = grid(94, 143) + axis(94, 143, 97, 3, [100,115,130]) +
		label('0.10', 115) + label('0.05', 130) +
		line(['33,136','47,122','63,117','77,112','97,103','123,101','150,102','170,105','188,99','207,98','227,101','247,101','267,103','287,108','303,109','320,104','340,104','400,104','450,110','500,120','545,129','560,125','585,108','599,103','625,98','649,98','669,102','689,107','720,110','760,119','800,127','830,132','868,136'], '#ff0000', 1) +
		line(['33,139','50,133','73,125','110,113','133,107','167,104','203,101','247,101','287,104','320,107','340,107','400,106','460,109','520,118','550,127','590,119','622,108','632,106','655,105','682,103','712,107','734,110','780,122','830,129','868,133'], '#ff0000', 1, '3 2');

	// Stochastic
	document.getElementById('stoch').innerHTML = grid(164, 213) + axis(164, 213, 164, 3.5, [178,192,206]) +
		label('90', 178) + label('80', 192) + label('70', 206) + hline(190, '#0000ff') +
		line(['33,210','47,190','60,177','80,181','97,175','107,171','120,173','143,172','165,172','185,171','207,172','227,175','253,172','293,172','317,169','340,171','400,173','450,175','500,181','550,182','575,173','600,176','640,179','700,184','725,187','745,192','760,204','800,207','868,208'], '#000', 1, '3 2') +
		line(['33,201','45,176','55,174','72,183','98,168','110,173','143,171','167,172','183,170','207,175','227,176','253,170','293,172','317,168','340,173','400,172','450,174','500,181','550,183','570,170','600,178','640,178','700,184','725,187','745,199','780,207','830,208','850,204','868,207'], '#ff0000', 2.5);

	// RSI
	document.getElementById('rsi').innerHTML = grid(235, 288) + axis(235, 288, 237, 6.5, [243,276]) +
		label('50', 276) + hline(258, '#0000ff') +
		line(['33,254','45,245','57,257','67,258','83,252','97,251','107,255','143,254','170,256','180,248','190,246','197,251','227,252','243,249','263,254','277,253','293,256','315,243','323,243','340,253','370,252','420,256','440,267','500,269','540,265','550,266','560,245','575,240','590,248','620,250','650,253','690,254','700,258','720,265','735,274','742,283','752,271','780,272','800,274','815,279','828,268','845,272','868,273'], '#ff0000', 2.5);

	// Candles: x, high, body top, body bottom, low, filled
	const candles = [
		[36,450,455,471,472,0],[45,436,439,453,453,0],[54,439,439,447,449,1],[63,447,449,451,454,1],[72,441,444,451,451,0],[81,432,434,442,442,0],
		[90,428,430,430,433,2],[99,427,430,432,432,1],[108,429,429,434,439,1],[117,430,432,432,434,2],[125,429,430,432,432,1],[134,430,430,430,435,2],
		[143,429,430,432,432,1],[152,431,431,431,431,2],[161,430,430,430,432,2],[170,431,431,431,432,2],[179,412,414,432,432,0],[188,405,409,409,414,2],
		[197,409,409,413,417,1],[206,412,412,412,414,2],[215,413,413,413,413,2],[224,413,413,413,413,2],[233,413,413,413,414,2],[242,408,409,412,412,0],
		[251,404,406,407,407,1],[260,406,407,407,407,2],[269,406,406,408,408,1],[278,406,406,409,414,1],[286,407,407,411,413,0],[295,408,408,408,410,2],
		[304,407,407,407,409,2],[313,399,403,407,407,0],[322,386,388,398,401,0],[331,381,382,385,387,1],[340,386,386,389,394,1],[349,388,390,390,392,2],
		[358,388,388,390,390,0],[367,387,388,388,389,2],[376,381,382,390,390,0],[385,376,380,385,385,1],[394,383,383,384,385,1],[403,381,383,383,385,2],
		[412,383,383,383,383,2],[421,383,383,383,385,2],[430,383,383,383,383,2],[439,383,383,383,383,2],[447,383,384,387,388,1],[456,385,387,387,389,2],
		[465,385,387,387,389,2],[474,387,387,387,387,2],[483,386,386,386,386,2],[492,385,387,387,389,2],[501,385,387,387,389,2],[510,384,386,388,388,0],
		[519,387,387,387,387,2],[528,385,386,386,388,2],[537,387,387,388,388,1],[546,385,385,387,387,1],[555,374,374,385,386,0],[564,356,356,374,374,0],
		[573,333,341,356,356,0],[582,341,345,349,349,1],[591,337,345,349,349,0],[600,341,341,343,344,1],[609,341,341,344,347,1],[618,341,341,344,344,0],
		[627,326,336,338,341,1],[636,335,335,339,341,1],[645,338,338,340,341,1],[654,337,339,339,341,2],[662,337,339,341,341,0],[671,337,339,339,341,2],
		[680,333,335,339,340,1],[689,338,338,340,340,1],[698,340,340,340,340,2],[707,340,340,342,342,1],[716,342,342,342,344,2],[725,343,343,344,349,1],
		[734,345,345,347,350,1],[743,348,348,354,354,1],[752,343,347,355,355,0],[761,341,347,347,353,2],[770,345,347,347,349,2],[779,348,348,352,352,0],
		[788,348,348,348,348,2],[797,346,346,348,348,0],[806,347,347,347,349,2],[815,347,347,347,349,2],[824,349,349,349,349,2],[832,342,346,350,353,0],
		[841,342,342,346,346,1],[850,344,344,346,346,1],[859,347,347,347,347,2],[868,347,347,347,347,2]
	];
	const candleSvg = candles.map(([x, hi, top, bot, lo, kind]) => {
		let s = `<path d="M${x+.5} ${hi}V${lo+1}" stroke="#000"/>`;
		if (kind === 2) s += `<path d="M${x-3} ${top+.5}h8" stroke="#000"/>`;
		else s += `<rect x="${x-2.5}" y="${top+.5}" width="6" height="${bot-top}" fill="${kind ? '#000' : '#fff'}" stroke="#000"/>`;
		return s;
	}).join('');

	// Price
	document.getElementById('price').innerHTML = `<g shape-rendering="crispEdges">` + grid(310, 502) + axis(310, 502, 319, 9, [328,373,418,463]) +
		label('4.0', 329) + label('3.5', 374) + label('3.0', 418) + label('2.5', 463) +
		line(['33,455','966,336'], '#500080', 1, '15 4') +
		line(['45,436','677,311'], '#0000ff', 1) +
		line(['33,483','868,324'], '#0000ff', 1) +
		candleSvg +
		line(['33,485','63,482','97,478','140,472','197,463','237,457','287,449','330,441','370,432','420,417','465,408','510,403','530,402','555,399','590,392','630,385','690,377','730,369','778,364','830,360','850,358','868,358'], '#008000', 3) +
		line(['33,481','63,475','83,471','107,464','140,454','177,443','197,435','220,429','257,422','287,417','313,413','330,408','370,401','420,390','470,386','500,386','530,386','555,385','597,376','627,368','663,358','690,352','717,346','737,342','797,343','817,344','868,346'], '#ff0000', 3) +
		`</g>`;

	// Volume bars
	const volX = [36,45,54,63,72,81,90,99,108,116,125,134,143,161,170,179,188,197,206,215,224,233,242,251,260,269,277,286,295,304,313,322,331,340,349,358,367,376,385,394,403,412,421,429,438,447,456,474,483,492,501,510,519,528,537,546,555,564,573,582,590,599,608,617,626,635,644,653,662,671,680,689,698,707,716,725,742,751,760,769,787,796,805,823,832,841,850];
	const volH = [112,102,50,18,27,57,52,24,13,13,10,18,15,1,10,110,102,27,8,3,9,25,30,9,7,21,13,2,6,39,81,56,26,12,5,1,33,42,11,14,1,4,3,2,8,11,4,1,10,3,2,14,3,3,2,1,60,97,118,31,52,11,19,9,72,20,10,1,9,2,15,3,4,1,1,10,20,24,6,2,1,7,1,2,31,10,3];
	const volTicks = axis(504, 636, 511, 10.6, [532,553,575,596,617]);
	document.getElementById('volume').innerHTML = grid(504, 636) + volTicks +
		`<path d="M33 503.500H1024" stroke="#000" stroke-width="2"/>` +
		volX.map((x, i) => `<path d="M${x+.5} 635V${635-volH[i]}" stroke="#0000ff" shape-rendering="crispEdges"/>`).join('') +
		label('50000', 532) + label('40000', 553) + label('30000', 575) + label('20000', 596) + label('10000', 617) +
		`<rect x="973.500" y="623.500" width="24" height="12" fill="#fff" stroke="#000"/><text x="975" y="633" font-size="10" font-family="Liberation Sans">x100</text>`;

	// Date and month rows
	const days = [31,7,14,21,28,4,11,18,25,2,9,16,23,30,6,13,20,27,4,11,18];
	const months = [[72,'August'],[277,'September'],[465,'October'],[662,'November'],[859,'December']];
	document.getElementById('dates').innerHTML =
		`<path d="M33 636H973M33 651.500H973" stroke="#000" stroke-width="1.500"/>` +
		gridX.map((x, i) => `<path d="M${x+.5} 636V651" stroke="#000"/><text x="${x+3}" y="648" font-size="12" letter-spacing=".5" font-family="Liberation Sans">${days[i]}</text>`).join('') +
		[277,662,859].map(x => `<path d="M${x+.5} 636V651" stroke="#000"/>`).join('') +
		months.map(([x, m]) => `<path d="M${x+.5} 652V667" stroke="#000"/><text x="${x+2}" y="664" font-size="12" letter-spacing=".6" font-family="Liberation Sans">${m}</text>`).join('');
</script>
</body>
</html>
